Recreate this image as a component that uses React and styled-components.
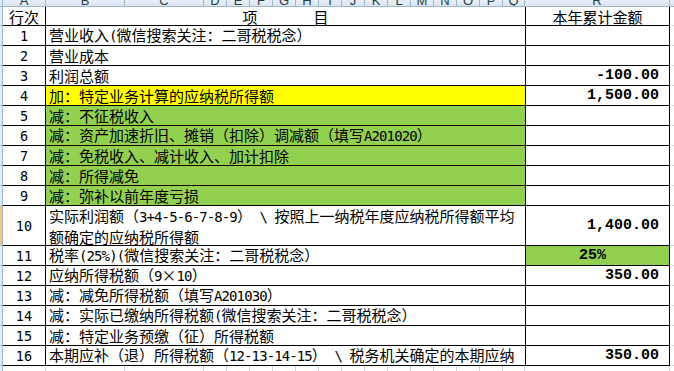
import React from 'react';
import styled, { createGlobalStyle } from 'styled-components';

const Global = createGlobalStyle`
  html, body { margin: 0; padding: 0; background: #ffffff; }
  body { font-family: "Noto Sans CJK SC", "Noto Sans", sans-serif; color: #000; }
`;

const COLS = [
  ['A', 42], ['B', 79], ['C', 79], ['D', 23], ['E', 23], ['F', 23], ['G', 23], ['H', 23],
  ['I', 23], ['J', 23], ['K', 23], ['L', 23], ['M', 23], ['N', 23], ['O', 23], ['P', 23],
  ['Q', 22], ['R', 145], ['S', 60],
];

const Sheet = styled.div`
  width: 674px;
  height: 371px;
  overflow: hidden;
  display: flex;
  flex-direction: column;
`;

const HeaderBar = styled.div`
  display: flex;
  flex: none;
  height: 7px;
  box-sizing: border-box;
  border-bottom: 1px solid #9eb6ce;
  background: linear-gradient(#e9eff8, #dbe5f1);
`;

const Corner = styled.div`
  flex: none;
  width: 3px;
  box-sizing: border-box;
  border-right: 1px solid #9eb6ce;
`;

const ColLetter = styled.div`
  flex: none;
  width: ${p => p.$w}px;
  box-sizing: border-box;
  border-right: 1px solid #9eb6ce;
  display: flex;
  align-items: flex-end;
  justify-content: center;
  overflow: hidden;
  font-family: "Liberation Sans", sans-serif;
  font-size: 13px;
  line-height: 11px;
  color: #27413e;
`;

const Row = styled.div`
  display: flex;
  flex: none;
  height: ${p => p.$h}px;
`;

const Stub = styled.div`
  flex: none;
  width: 3px;
  box-sizing: border-box;
  border-right: 1px solid #9eb6ce;
  border-bottom: 1px solid #9eb6ce;
  background: ${p => (p.$sel ? '#f6c67a' : '#e4ecf7')};
`;

const Cell = styled.div`
  flex: none;
  box-sizing: border-box;
  border-right: 1px solid #000;
  border-bottom: 1px solid #000;
  display: flex;
  align-items: center;
  overflow: hidden;
  white-space: nowrap;
`;

const NumCell = styled(Cell)`
  width: 43px;
  justify-content: center;
  font-family: "DejaVu Sans Mono", monospace;
  font-size: 13.5px;
`;

const TitleNum = styled(Cell)`
  width: 43px;
  justify-content: center;
  font-size: 15px;
`;

const ItemCell = styled(Cell)`
  width: 480px;
  padding-left: 3px;
  font-size: 15px;
  line-height: 19px;
  background: ${p => p.$bg || '#fff'};
  justify-content: ${p => (p.$center ? 'center' : 'flex-start')};
`;

const Latin = styled.span`
  font-family: "DejaVu Sans Mono", monospace;
  font-size: 14px;
  letter-spacing: -0.9px;
`;

const AmountCell = styled(Cell)`
  width: 144px;
  padding-right: 10px;
  justify-content: ${p => (p.$center ? 'center' : 'flex-end')};
  background: ${p => p.$bg || '#fff'};
  font-family: "Liberation Mono", monospace;
  font-weight: bold;
  font-size: 15px;
`;

const TitleAmount = styled(Cell)`
  width: 144px;
  justify-content: center;
  font-size: 15px;
`;

const Spill = styled.div`
  flex: 1;
  box-sizing: border-box;
  border-bottom: 1px solid #d0d7e5;
`;

const TitleWords = styled.span`
  display: inline-flex;
  gap: 56px;
  padding-right: 3px;
`;

const GridCell = styled.div`
  flex: none;
  width: ${p => p.$w}px;
  box-sizing: border-box;
  border-right: 1px solid #d0d7e5;
  border-bottom: 1px solid #d0d7e5;
`;

const YELLOW = '#ffff00';
const GREEN = '#92d050';

const rows = [
  { n: '1', text: '营业收入(微信搜索关注：二哥税税念）' },
  { n: '2', text: '营业成本' },
  { n: '3', text: '利润总额', amt: '-100.00' },
  { n: '4', text: '加：特定业务计算的应纳税所得额', amt: '1,500.00', bg: YELLOW },
  { n: '5', text: '减：不征税收入', bg: GREEN },
  { n: '6', text: '减：资产加速折旧、摊销（扣除）调减额（填写A201020）', bg: GREEN },
  { n: '7', text: '减：免税收入、减计收入、加计扣除', bg: GREEN },
  { n: '8', text: '减：所得减免', bg: GREEN },
  { n: '9', text: '减：弥补以前年度亏损', bg: GREEN },
  {
    n: '10',
    lines: ['实际利润额（3+4-5-6-7-8-9） \\ 按照上一纳税年度应纳税所得额平均', '额确定的应纳税所得额'],
    amt: '1,400.00',
    h: 40,
    sel: true,
  },
  { n: '11', text: '税率(25%)(微信搜索关注：二哥税税念）', amt: '25%', amtBg: GREEN, center: true },
  { n: '12', text: '应纳所得税额（9×10）', amt: '350.00' },
  { n: '13', text: '减：减免所得税额（填写A201030）' },
  { n: '14', text: '减：实际已缴纳所得税额(微信搜索关注：二哥税税念）' },
  { n: '15', text: '减：特定业务预缴（征）所得税额' },
  { n: '16', text: '本期应补（退）所得税额（12-13-14-15） \\ 税务机关确定的本期应纳', amt: '350.00' },
];

function Mixed({ text }) {
  const parts = text.split(/([\x20-\x7e]+)/).filter(Boolean);
  return parts.map((p, i) =>
    /^[\x20-\x7e]+$/.test(p) ? <Latin key={i}>{p.replace(/ /g, '\u00a0')}</Latin> : <span key={i}>{p}</span>
  );
}

export default function App() {
  return (
    <>
      <Global />
      <Sheet>
        <HeaderBar>
          <Corner />
          {COLS.map(([l, w], i) => (
            <ColLetter key={l} $w={i === 0 ? 43 : w}>{l}</ColLetter>
          ))}
        </HeaderBar>
        <Row $h={19}>
          <Stub />
          <TitleNum>行次</TitleNum>
          <ItemCell $center>
            <TitleWords><span>项</span><span>目</span></TitleWords>
          </ItemCell>
          <TitleAmount>本年累计金额</TitleAmount>
          <Spill />
        </Row>
        {rows.map(r => (
          <Row key={r.n} $h={r.h || 20}>
            <Stub $sel={r.sel} />
            <NumCell>{r.n}</NumCell>
            <ItemCell $bg={r.bg}>
              {r.lines ? (
                <span>
                  <Mixed text={r.lines[0]} />
                  <br />
                  <Mixed text={r.lines[1]} />
                </span>
              ) : (
                <span><Mixed text={r.text} /></span>
              )}
            </ItemCell>
            <AmountCell $bg={r.amtBg} $center={r.center}>{r.amt}</AmountCell>
            <Spill />
          </Row>
        ))}
        <Row $h={20}>
          <Stub />
          {COLS.map(([l, w], i) => (
            <GridCell key={l} $w={i === 0 ? 43 : w} />
          ))}
        </Row>
      </Sheet>
    </>
  );
}
